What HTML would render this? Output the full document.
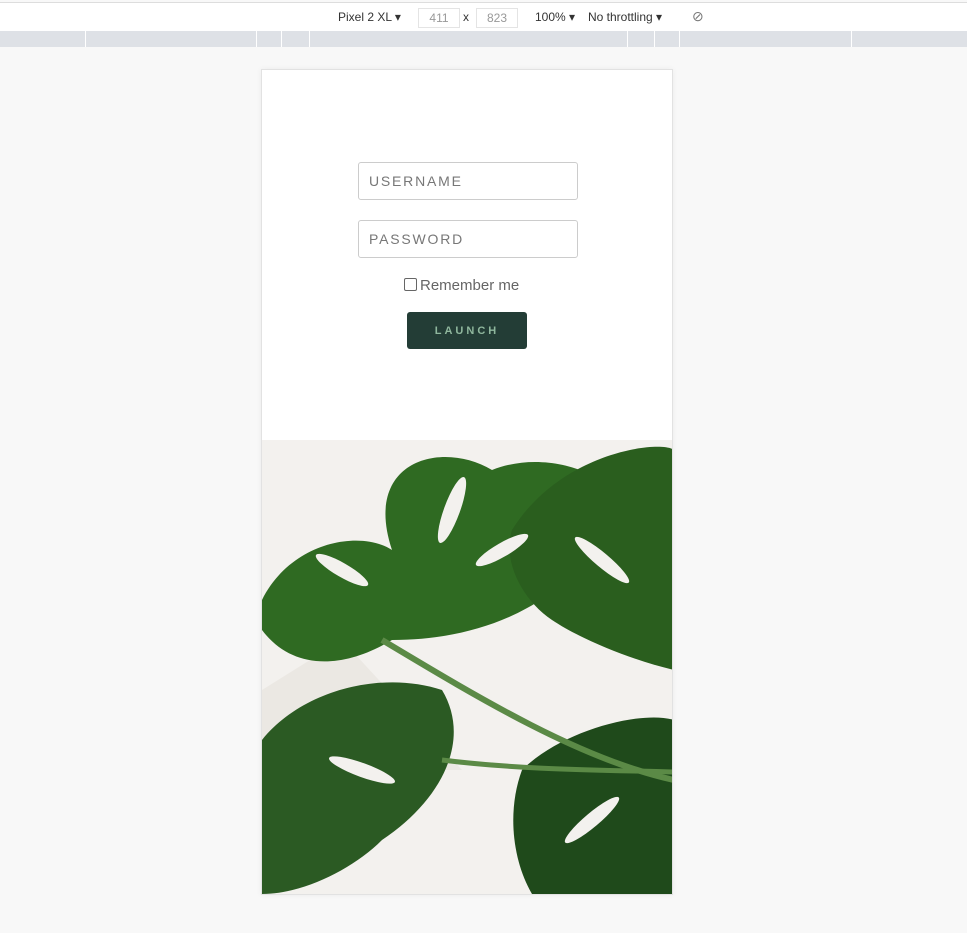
<!DOCTYPE html>
<html><head><style>
body{margin:0;width:967px;height:933px;background:#f8f8f8;font-family:"Liberation Sans",sans-serif;position:relative;overflow:hidden}
.tb{position:absolute;left:0;top:2px;width:967px;height:28px;background:#fff;border-top:1px solid #ddd;border-bottom:1px solid #ccc;font-size:12px;color:#333}
.tb span{position:absolute;top:7px}
.box{position:absolute;top:5px;width:40px;height:18px;border:1px solid #e4e4e4;color:#999;text-align:center;line-height:18px}
.ruler{position:absolute;left:0;top:31px;width:967px;height:16px;background:#dee1e6}
.ruler i{position:absolute;top:0;width:1px;height:16px;background:#fff}
.dev{position:absolute;left:261px;top:69px;width:410px;height:824px;background:#fff;border:1px solid #e2e2e2;box-shadow:0 0 6px rgba(0,0,0,.05)}
.in{position:absolute;left:96px;width:220px;height:38px;border:1px solid #ccc;border-radius:3px;font-size:14px;letter-spacing:1.8px;color:#777;line-height:37px;padding-left:10px;box-sizing:border-box}
.rm{position:absolute;left:142px;top:207px;font-size:15px;color:#666}
.cb{display:inline-block;width:11px;height:11px;border:1px solid #666;border-radius:2px;vertical-align:-1px;margin-right:3px}
.btn{position:absolute;left:145px;top:242px;width:120px;height:37px;background:#233d36;border-radius:3px;color:#8fb79d;font-size:11px;font-weight:bold;letter-spacing:3px;text-align:center;line-height:39px}
</style></head><body>
<div class="tb">
<span style="left:338px">Pixel 2 XL ▾</span>
<div class="box" style="left:418px">411</div>
<span style="left:463px">x</span>
<div class="box" style="left:476px">823</div>
<span style="left:535px">100% ▾</span>
<span style="left:588px">No throttling ▾</span>
<span style="left:692px;font-size:14px;top:5px;color:#777">⊘</span>
</div>
<div class="ruler"><i style="left:85px"></i><i style="left:256px"></i><i style="left:281px"></i><i style="left:309px"></i><i style="left:627px"></i><i style="left:654px"></i><i style="left:679px"></i><i style="left:851px"></i></div>
<div class="dev">
<div class="in" style="top:92px">USERNAME</div>
<div class="in" style="top:150px">PASSWORD</div>
<div class="rm"><span class="cb"></span>Remember me</div>
<div class="btn">LAUNCH</div>
<svg style="position:absolute;left:0;top:370px" width="410" height="454" viewBox="0 0 410 454">
<rect width="412" height="454" fill="#f3f1ee"/>
<polygon points="0,250 80,200 200,330 0,330" fill="#ebe8e3"/>
<g fill="#2f6a22">
<path d="M0,160 C30,100 100,90 130,110 C100,20 180,0 230,30 C280,10 340,30 360,60 C330,140 250,200 130,200 C80,230 30,230 0,190Z"/>
<path d="M250,90 C300,10 400,0 412,10 L412,230 C370,220 320,200 290,180 C260,160 240,120 250,90Z" fill="#2a5e1e"/>
<path d="M0,300 C40,250 120,230 180,250 C210,300 180,360 120,400 C90,430 40,454 0,454Z" fill="#2b5a23"/>
<path d="M260,330 C300,290 380,270 412,280 L412,454 L270,454 C250,420 245,370 260,330Z" fill="#1f4a1b"/>
</g>
<g fill="#f3f1ee">
<ellipse cx="190" cy="70" rx="8" ry="35" transform="rotate(20 190 70)"/>
<ellipse cx="240" cy="110" rx="7" ry="30" transform="rotate(60 240 110)"/>
<ellipse cx="80" cy="130" rx="7" ry="30" transform="rotate(-60 80 130)"/>
<ellipse cx="340" cy="120" rx="7" ry="35" transform="rotate(-50 340 120)"/>
<ellipse cx="100" cy="330" rx="7" ry="35" transform="rotate(-70 100 330)"/>
<ellipse cx="330" cy="380" rx="7" ry="35" transform="rotate(50 330 380)"/>
</g>
<path d="M120,200 C220,260 320,320 412,340" stroke="#5b8a46" stroke-width="6" fill="none"/>
<path d="M180,320 C260,330 340,330 412,332" stroke="#5b8a46" stroke-width="5" fill="none"/>
</svg>
</div>
</body></html>
